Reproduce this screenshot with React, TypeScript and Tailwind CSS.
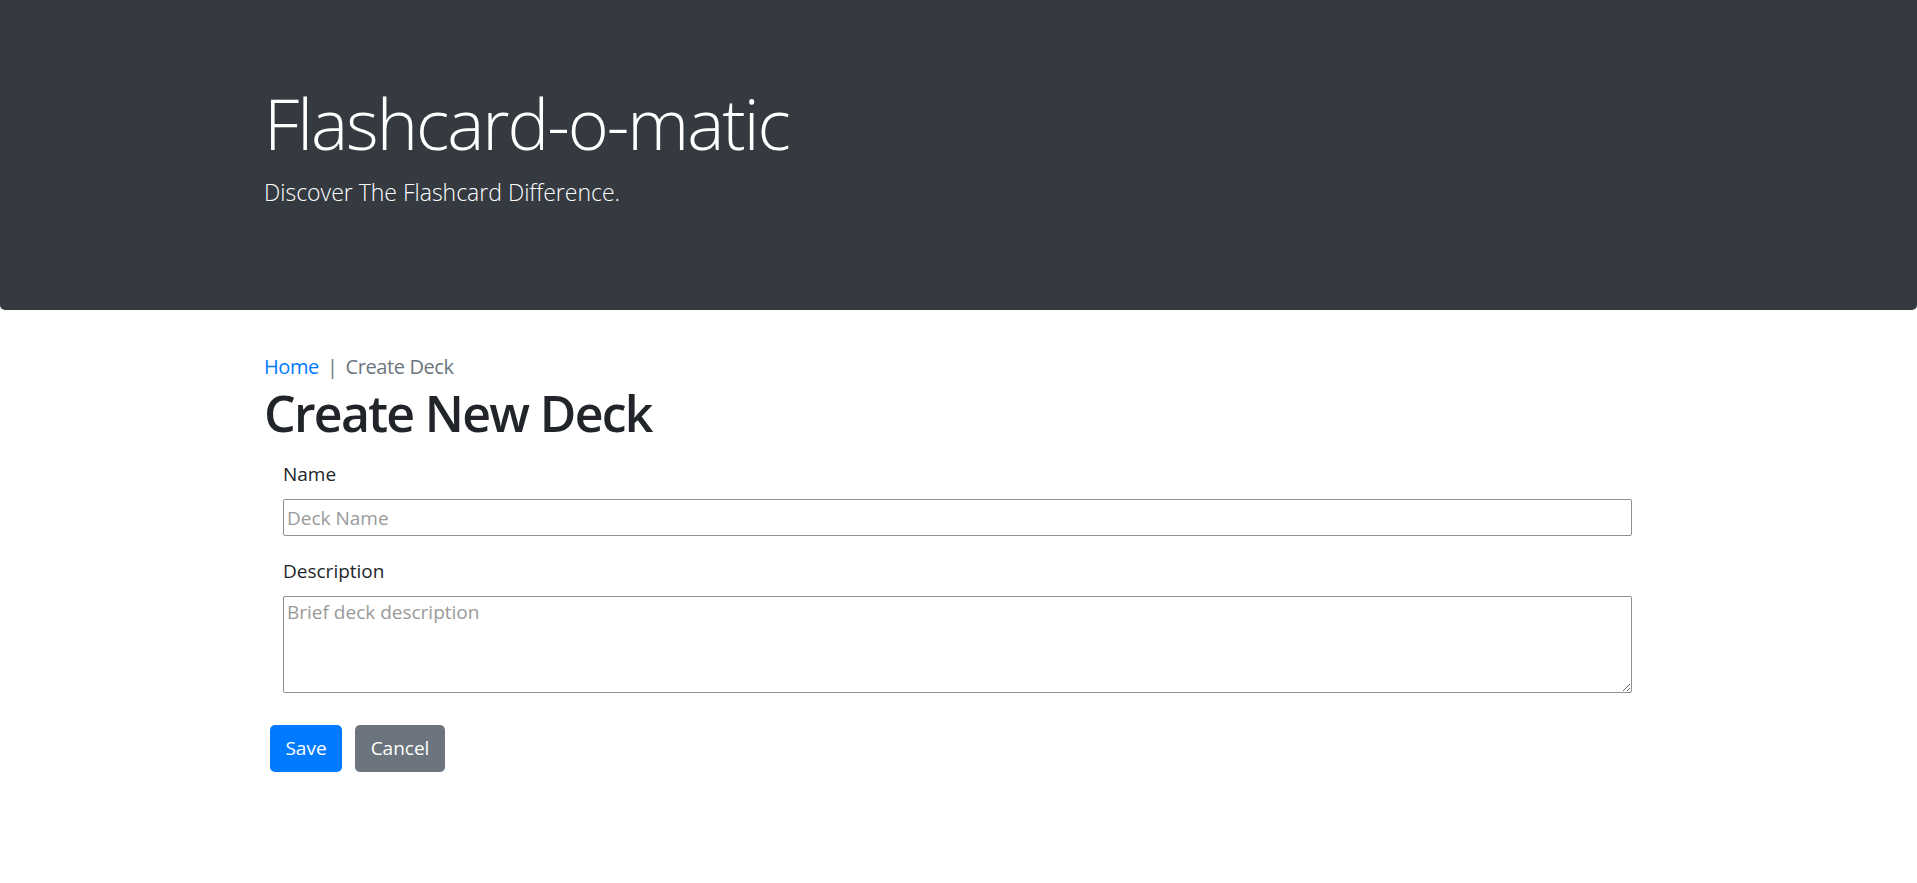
import { useState } from "react";

const font = { fontFamily: '"Open Sans", "Noto Sans", "Liberation Sans", sans-serif' };

export default function App() {
  const [name, setName] = useState("");
  const [description, setDescription] = useState("");

  return (
    <div className="min-h-[883px] bg-white text-[#212529]" style={font}>
      {/* Jumbotron */}
      <header className="h-[310px] w-full rounded-b-[5px] bg-[#343a40] text-white">
        <div className="mx-auto w-[1425px] px-[18px] pt-[81px]">
          <h1 className="text-[70px] font-light leading-[84px] tracking-[-2px]">
            Flashcard-o-matic
          </h1>
          <p className="mt-[9px] text-[23px] font-light leading-[36px]">
            Discover The Flashcard Difference.
          </p>
        </div>
      </header>

      <main className="mx-auto w-[1425px] px-[18px] pt-[42px]">
        <nav className="flex items-center text-[20px] leading-[30px] tracking-[-0.4px]">
          <a href="#" className="text-[#007bff]">
            Home
          </a>
          <span className="mx-[8px] text-[#6c757d]">|</span>
          <span className="text-[#6c757d]">Create Deck</span>
        </nav>

        <h1 className="mt-[1px] text-[50px] font-semibold leading-[60px] tracking-[-1.7px]">
          Create New Deck
        </h1>

        <form className="mt-[16px]" onSubmit={(e) => e.preventDefault()}>
          <div className="ml-[19px] mr-[21px]">
            <label htmlFor="name" className="block text-[19px] leading-[30px]">
              Name
            </label>
            <input
              id="name"
              type="text"
              value={name}
              onChange={(e) => setName(e.target.value)}
              placeholder="Deck Name"
              className="mt-[10px] block h-[37px] w-full rounded-[2px] border border-[#8f8f8f] px-[3px] text-[19px] outline-none placeholder:text-[#9a9a9a]"
            />
          </div>

          <div className="ml-[19px] mr-[21px] mt-[20px]">
            <label htmlFor="description" className="block text-[19px] leading-[30px]">
              Description
            </label>
            <textarea
              id="description"
              value={description}
              onChange={(e) => setDescription(e.target.value)}
              placeholder="Brief deck description"
              className="mt-[10px] block h-[97px] w-full rounded-[2px] border border-[#8f8f8f] px-[3px] py-[2px] text-[19px] leading-[26px] outline-none placeholder:text-[#9a9a9a]"
            />
          </div>

          <div className="ml-[6px] mt-[32px] flex gap-[13px]">
            <button
              type="submit"
              className="flex h-[47px] w-[72px] items-center justify-center rounded-[5px] bg-[#007bff] text-[19px] text-white"
            >
              Save
            </button>
            <button
              type="button"
              className="flex h-[47px] w-[90px] items-center justify-center rounded-[5px] bg-[#6c757d] text-[19px] text-white"
            >
              Cancel
            </button>
          </div>
        </form>
      </main>
    </div>
  );
}
